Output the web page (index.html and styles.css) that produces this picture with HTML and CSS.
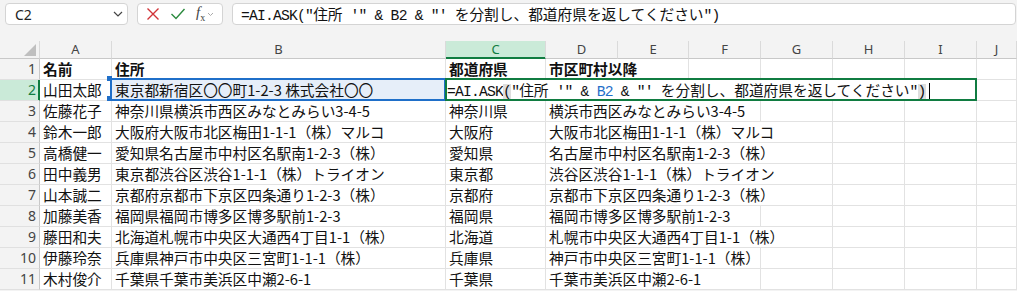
FILE: index.html
```html
<!DOCTYPE html>
<html lang="ja">
<head>
  <meta charset="utf-8">
  <title>AI.ASK</title>
  <link rel="stylesheet" href="styles.css">
</head>
<body>
  <!-- 数式バー -->
  <div class="formula-bar">
    <div class="name-box">
      <span>C2</span>
      <svg width="12" height="12" viewBox="0 0 12 12"><polyline points="2,4 6,8 10,4" fill="none" stroke="#444" stroke-width="1.2"/></svg>
    </div>
    <div class="fx-box">
      <svg width="14" height="14" viewBox="0 0 14 14"><path d="M1.5 1.5 L12.5 12.5 M12.5 1.5 L1.5 12.5" stroke="#d13438" stroke-width="1.4" fill="none"/></svg>
      <svg width="16" height="14" viewBox="0 0 16 14"><polyline points="1.5,7 6,11.5 14.5,2" fill="none" stroke="#2b8a3e" stroke-width="1.4"/></svg>
      <span class="fx"><i>f</i><sub>x</sub></span>
      <svg width="7" height="6" viewBox="0 0 7 6"><polyline points="1,2 3.5,4.5 6,2" fill="none" stroke="#aaa" stroke-width="1"/></svg>
    </div>
    <div class="formula-input"><span class="m">=AI.ASK("</span>住所<span class="m"> '" &amp; B2 &amp; "' </span>を分割し、都道府県を返してください<span class="m">")</span></div>
  </div>

  <!-- シート -->
  <div class="sheet">
    <div class="corner"><span class="tri"></span></div>
    <div class="hd">A</div>
    <div class="hd">B</div>
    <div class="hd sel">C</div>
    <div class="hd">D</div>
    <div class="hd">E</div>
    <div class="hd">F</div>
    <div class="hd">G</div>
    <div class="hd">H</div>
    <div class="hd">I</div>
    <div class="hd">J</div>

    <div class="rh">1</div>
    <div class="c bold">名前</div>
    <div class="c bold">住所</div>
    <div class="c bold">都道府県</div>
    <div class="c bold span2">市区町村以降</div>
    <div class="c"></div><div class="c"></div><div class="c"></div><div class="c"></div><div class="c"></div>

    <div class="rh sel">2</div>
    <div class="c">山田太郎</div>
    <div class="c ref">東京都新宿区〇〇町1-2-3 株式会社〇〇</div>
    <div class="c edit"><span class="m">=AI.ASK</span><span class="m pm">(</span><span class="m">"</span>住所<span class="m"> '" &amp; <span class="blue">B2</span> &amp; "' </span>を分割し、都道府県を返してください<span class="m">"</span><span class="m pm">)</span><span class="caret"></span></div>
    <div class="c"></div>

    <div class="rh">3</div>
    <div class="c">佐藤花子</div>
    <div class="c">神奈川県横浜市西区みなとみらい3-4-5</div>
    <div class="c">神奈川県</div>
    <div class="c span3">横浜市西区みなとみらい3-4-5</div>
    <div class="c"></div><div class="c"></div><div class="c"></div><div class="c"></div>

    <div class="rh">4</div>
    <div class="c">鈴木一郎</div>
    <div class="c">大阪府大阪市北区梅田1-1-1（株）マルコ</div>
    <div class="c">大阪府</div>
    <div class="c span4">大阪市北区梅田1-1-1（株）マルコ</div>
    <div class="c"></div><div class="c"></div><div class="c"></div>

    <div class="rh">5</div>
    <div class="c">高橋健一</div>
    <div class="c">愛知県名古屋市中村区名駅南1-2-3（株）</div>
    <div class="c">愛知県</div>
    <div class="c span4">名古屋市中村区名駅南1-2-3（株）</div>
    <div class="c"></div><div class="c"></div><div class="c"></div>

    <div class="rh">6</div>
    <div class="c">田中義男</div>
    <div class="c">東京都渋谷区渋谷1-1-1（株）トライオン</div>
    <div class="c">東京都</div>
    <div class="c span4">渋谷区渋谷1-1-1（株）トライオン</div>
    <div class="c"></div><div class="c"></div><div class="c"></div>

    <div class="rh">7</div>
    <div class="c">山本誠二</div>
    <div class="c">京都府京都市下京区四条通り1-2-3（株）</div>
    <div class="c">京都府</div>
    <div class="c span4">京都市下京区四条通り1-2-3（株）</div>
    <div class="c"></div><div class="c"></div><div class="c"></div>

    <div class="rh">8</div>
    <div class="c">加藤美香</div>
    <div class="c">福岡県福岡市博多区博多駅前1-2-3</div>
    <div class="c">福岡県</div>
    <div class="c span3">福岡市博多区博多駅前1-2-3</div>
    <div class="c"></div><div class="c"></div><div class="c"></div><div class="c"></div>

    <div class="rh">9</div>
    <div class="c">藤田和夫</div>
    <div class="c">北海道札幌市中央区大通西4丁目1-1（株）</div>
    <div class="c">北海道</div>
    <div class="c span4">札幌市中央区大通西4丁目1-1（株）</div>
    <div class="c"></div><div class="c"></div><div class="c"></div>

    <div class="rh">10</div>
    <div class="c">伊藤玲奈</div>
    <div class="c">兵庫県神戸市中央区三宮町1-1-1（株）</div>
    <div class="c">兵庫県</div>
    <div class="c span3">神戸市中央区三宮町1-1-1（株）</div>
    <div class="c"></div><div class="c"></div><div class="c"></div><div class="c"></div>

    <div class="rh">11</div>
    <div class="c">木村俊介</div>
    <div class="c">千葉県千葉市美浜区中瀬2-6-1</div>
    <div class="c">千葉県</div>
    <div class="c span3">千葉市美浜区中瀬2-6-1</div>
    <div class="c"></div><div class="c"></div><div class="c"></div><div class="c"></div>
  </div>
</body>
</html>
```

FILE: styles.css
```css
/* 全体 */
body {
  margin: 0;
  background: #f3f3f3;
  font-family: "Noto Sans CJK JP", sans-serif;
  color: #111;
}

/* 数式バー */
.formula-bar {
  display: flex;
  align-items: flex-start;
  gap: 9px;
  height: 38px;
  padding: 3px 1px 0 5px;
}

.name-box,
.fx-box,
.formula-input {
  height: 22px;
  box-sizing: border-box;
  border: 1px solid #d4d4d4;
  border-radius: 4px;
  background: #fff;
}

.name-box {
  width: 123px;
  display: flex;
  align-items: center;
  justify-content: space-between;
  padding: 0 3px 0 9px;
  font: 14px "Noto Sans", sans-serif;
  color: #222;
}

.fx-box {
  width: 86px;
  display: flex;
  align-items: center;
  padding-left: 8px;
  gap: 10px;
}

.fx-box svg:last-child {
  margin-left: -8px;
}

.fx {
  font: italic 15px "Liberation Serif", serif;
  color: #444;
  line-height: 1;
}

.fx sub {
  font-size: 10px;
  font-style: normal;
}

.formula-input {
  flex: 1;
  padding-left: 8px;
  font-size: 14.7px;
  line-height: 20px;
  white-space: nowrap;
  overflow: hidden;
}

/* 数式の英数字 */
.m {
  font-family: "Liberation Mono", monospace;
  letter-spacing: -0.8px;
}

.pm {
  background: #dedede;
}

.blue {
  color: #1f6fc9;
}

.caret {
  display: inline-block;
  width: 1px;
  height: 16px;
  margin-left: 3px;
  background: #000;
  vertical-align: -3px;
}

/* シート */
.sheet {
  display: grid;
  grid-template-columns: 40px 72px 334px 100px 72px 71px 72px 72px 72px 72px 1fr;
  grid-template-rows: 18px repeat(11, 21px);
  background: #fff;
}

.corner {
  display: flex;
  justify-content: flex-end;
  align-items: flex-end;
  padding: 0 3px 2px 0;
  background: #f3f3f3;
  border-right: 1px solid #d9d9d9;
  border-bottom: 1px solid #c8c8c8;
}

.tri {
  width: 0;
  height: 0;
  border-left: 12px solid transparent;
  border-bottom: 12px solid #bfbfbf;
}

/* 列見出し */
.hd {
  background: #f3f3f3;
  border-right: 1px solid #dadada;
  border-bottom: 1px solid #c8c8c8;
  text-align: center;
  font: 13px/17px "Noto Sans", sans-serif;
  color: #444;
}

.hd.sel {
  background: #caead8;
  color: #107c41;
  border-bottom-color: #107c41;
  box-shadow: inset 0 -1px 0 #107c41;
}

/* 行見出し */
.rh {
  background: #f3f3f3;
  border-right: 1px solid #c8c8c8;
  border-bottom: 1px solid #e0e0e0;
  text-align: right;
  padding-right: 3px;
  font: 14px/20px "Noto Sans", sans-serif;
  color: #444;
}

.rh.sel {
  background: #caead8;
  color: #107c41;
  border-right-color: #107c41;
  box-shadow: inset -1px 0 0 #107c41;
}

/* セル */
.c {
  border-right: 1px solid #e2e2e2;
  border-bottom: 1px solid #e2e2e2;
  padding: 0 3px;
  font-size: 14.7px;
  line-height: 20px;
  white-space: nowrap;
  min-width: 0;
}

.bold {
  font-weight: 700;
}

.span2 { grid-column: span 2; }
.span3 { grid-column: span 3; }
.span4 { grid-column: span 4; }

/* 参照中のセル B2 */
.ref {
  position: relative;
  background: #e6eef9;
}

.ref::after {
  content: "";
  position: absolute;
  top: -2px;
  left: -2px;
  right: -1px;
  bottom: -1px;
  border: 2px solid #1f6fc9;
}

.ref::before {
  content: "";
  position: absolute;
  top: -4px;
  left: -5px;
  width: 5px;
  height: 5px;
  background: #1f6fc9;
  box-shadow: 0 20px 0 #1f6fc9;
}

/* 編集中のセル C2 */
.edit {
  grid-column: span 7;
  position: relative;
  padding-left: 1px;
}

.edit::after {
  content: "";
  position: absolute;
  top: -2px;
  left: -1px;
  right: -1px;
  bottom: -1px;
  border: 2px solid #107c41;
  pointer-events: none;
}
```
